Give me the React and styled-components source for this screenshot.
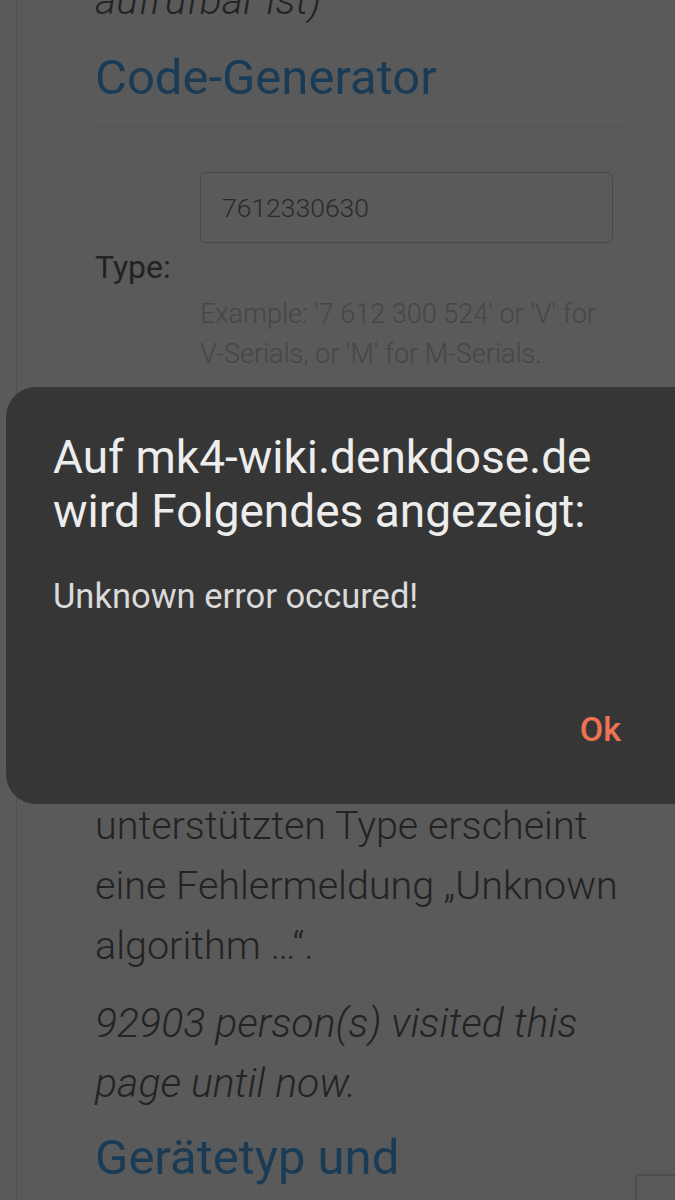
import styled, { createGlobalStyle } from 'styled-components';

const GlobalStyle = createGlobalStyle`
  html, body {
    margin: 0;
    padding: 0;
    background: #5a5a5a;
    overflow: hidden;
  }
  body {
    font-family: Roboto, 'Noto Sans', sans-serif;
  }
`;

const Page = styled.div`
  margin-left: 16px;
  border-left: 1px solid #4f4f4f;
  padding: 0 47px 0 78px;
  height: 1200px;
  overflow: hidden;
`;

const Content = styled.div`
  margin-top: -90px;
`;

const Text = styled.p`
  margin: 0 0 ${p => p.$gap || 0}px;
  font-size: ${p => (p.$italic ? 41 : 39.5)}px;
  line-height: 60px;
  font-weight: 300;
  font-style: ${p => (p.$italic ? 'italic' : 'normal')};
  color: #232323;
`;

const Heading = styled.h2`
  margin: ${p => p.$top}px 0 0;
  font-size: 49px;
  line-height: 60px;
  font-weight: 400;
  color: #1a3b55;
`;

const Rule = styled.hr`
  margin: 18px 0 45px;
  border: 0;
  border-top: 1px solid #525252;
`;

const FormRow = styled.div`
  display: flex;
  align-items: center;
  margin-top: ${p => p.$top || 0}px;
`;

const Label = styled.label`
  width: 105px;
  flex-shrink: 0;
  padding-bottom: 12px;
  font-size: 32px;
  line-height: 40px;
  color: #222;
`;

const Field = styled.div`
  flex: 1;
  padding-right: 15px;
`;

const Input = styled.div`
  box-sizing: border-box;
  height: 71px;
  display: flex;
  align-items: center;
  padding: 0 21px;
  border: 1.5px solid #484848;
  border-radius: 6px;
  font-size: 26.5px;
  font-weight: 300;
  color: #2a2a2a;
`;

const Help = styled.div`
  margin-top: 51px;
  font-size: 27px;
  line-height: 40px;
  font-weight: 300;
  color: #464646;
`;

const Button = styled.div`
  display: inline-block;
  margin: 34px 0 0 105px;
  padding: 0 26px;
  height: 64px;
  line-height: 64px;
  border-radius: 6px;
  background: #1a3b55;
  color: #5a5a5a;
  font-size: 28px;
`;

const Badge = styled.div`
  position: fixed;
  left: 636px;
  top: 1175px;
  width: 90px;
  height: 70px;
  border: 1px solid #4b4b4b;
  border-radius: 3px;
  box-shadow: 0 0 3px rgba(0, 0, 0, 0.25);
`;

const Dialog = styled.div`
  position: fixed;
  left: 6px;
  top: 387px;
  width: 700px;
  height: 417px;
  box-sizing: border-box;
  padding: 43px 85px 0 47px;
  border-radius: 30px;
  background: #363636;
  display: flex;
  flex-direction: column;
`;

const DialogTitle = styled.div`
  font-size: 46px;
  line-height: 54px;
  color: #ededed;
`;

const DialogMessage = styled.div`
  margin-top: 38px;
  font-size: 34.5px;
  line-height: 40px;
  color: #dadada;
`;

const Actions = styled.div`
  display: flex;
  justify-content: flex-end;
  margin-top: 93px;
`;

const OkButton = styled.span`
  font-size: 34px;
  line-height: 40px;
  font-weight: 500;
  color: #ee7352;
`;

export default function App() {
  return (
    <>
      <GlobalStyle />
      <Page>
        <Content>
          <Text $italic>
            (sofern die Seite noch
            <br />
            aufrufbar ist)
          </Text>
          <Heading $top={18}>Code-Generator</Heading>
          <Rule />

          <FormRow>
            <Label>Type:</Label>
            <Field>
              <Input>7612330630</Input>
              <Help>
                Example: '7 612 300 524' or 'V' for V-Serials, or 'M' for M-Serials.
              </Help>
            </Field>
          </FormRow>

          <FormRow $top={34}>
            <Label>Serial:</Label>
            <Field>
              <Input>V1234567</Input>
            </Field>
          </FormRow>
          <Button>Generate</Button>
          <FormRow $top={34}>
            <Label>Code:</Label>
            <Field>
              <Input />
            </Field>
          </FormRow>

          <div style={{ height: 54 }} />
          <Text $gap={17}>
            Hinweis: Bei einem nicht unterstützten Type erscheint eine Fehlermeldung „Unknown algorithm …“.
          </Text>
          <Text $italic $gap={0}>92903 person(s) visited this page until now.</Text>
          <Heading $top={15}>Gerätetyp und Typennummer</Heading>
        </Content>
      </Page>
      <Badge />

      <Dialog>
        <DialogTitle>
          Auf mk4-wiki.denkdose.de
          <br />
          wird Folgendes angezeigt:
        </DialogTitle>
        <DialogMessage>Unknown error occured!</DialogMessage>
        <Actions>
          <OkButton>Ok</OkButton>
        </Actions>
      </Dialog>
    </>
  );
}
